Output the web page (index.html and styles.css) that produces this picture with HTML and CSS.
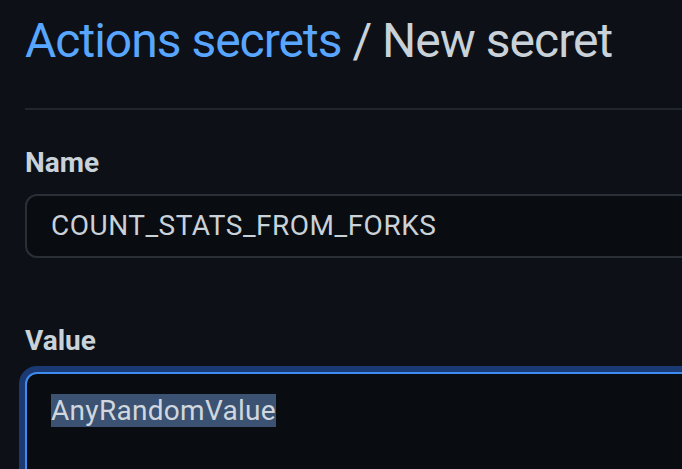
FILE: index.html
```html
<!DOCTYPE html>
<html lang="en">
<head>
<meta charset="utf-8">
<title>Actions secrets / New secret</title>
<link rel="stylesheet" href="styles.css">
</head>
<body>
<main class="page">
  <h1 class="title"><a class="crumb" href="#">Actions secrets</a> / New secret</h1>
  <form class="form">
    <div class="field">
      <label class="label">Name</label>
      <div class="input">COUNT_STATS_FROM_FORKS</div>
    </div>
    <div class="field field-value">
      <label class="label">Value</label>
      <div class="textarea"><span class="selected">AnyRandomValue</span></div>
    </div>
  </form>
</main>
</body>
</html>
```
FILE: styles.css
```css
html, body {
  margin: 0;
  padding: 0;
  background: #0d1117;
}
body {
  font-family: Roboto, "Liberation Sans", Arial, sans-serif;
  color: #c9d1d9;
}
.page {
  padding-left: 25px;
  height: 469px;
  overflow: hidden;
  box-sizing: border-box;
}
.title {
  margin: 0;
  padding-top: 5px;
  padding-bottom: 31px;
  font-size: 48px;
  line-height: 72px;
  font-weight: 400;
  letter-spacing: -1px;
  color: #c9d1d9;
  border-bottom: 2px solid #21262d;
  white-space: nowrap;
}
.crumb {
  color: #58a6ff;
  text-decoration: none;
}
.form {
  padding-top: 33px;
  margin-right: -30px;
}
.field {
  display: flex;
  flex-direction: column;
  gap: 11px;
}
.field-value {
  margin-top: 63px;
}
.label {
  font-size: 28px;
  line-height: 40px;
  font-weight: 700;
  color: #c9d1d9;
}
.input {
  height: 60px;
  line-height: 60px;
  font-size: 28px;
  letter-spacing: 0.5px;
  padding-left: 24px;
  background: #090c10;
  border: 2px solid #2a2f36;
  border-radius: 12px;
  color: #c9d1d9;
}
.textarea {
  height: 200px;
  font-size: 28px;
  line-height: 34px;
  letter-spacing: 0.3px;
  padding: 20px 24px;
  background: #090c10;
  border: 2px solid #3f8cf0;
  border-radius: 12px;
  box-shadow: 0 0 0 6px #1b3a74;
  color: #c9d1d9;
}
.selected {
  background: #3b5272;
  color: #d0d7de;
}
```
